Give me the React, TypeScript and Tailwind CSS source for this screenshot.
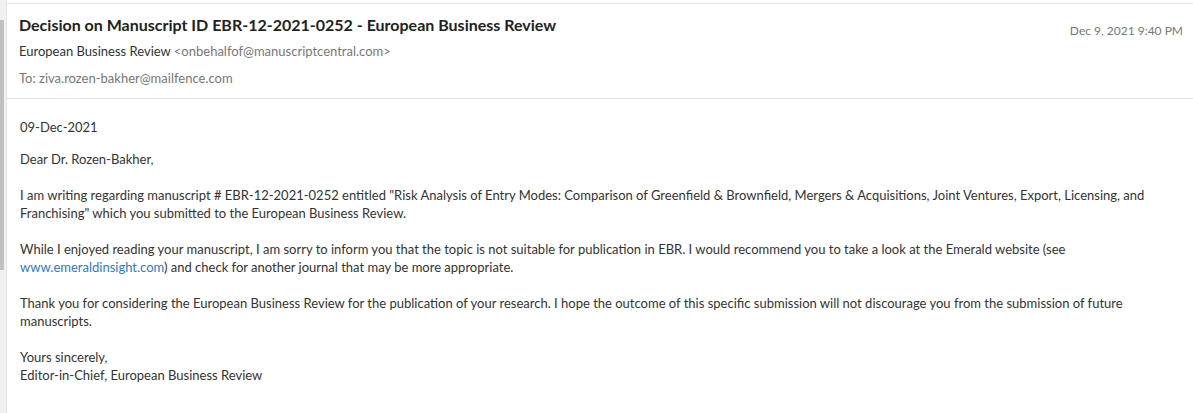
import React from 'react';

export default function App() {
  return (
    <div className="flex h-[413px] w-[1193px] bg-white font-['Lato',sans-serif] text-[#333]">
      {/* left scroll strip */}
      <div className="relative w-[6px] shrink-0 bg-[#f1f1f1]">
        <div className="absolute left-0 top-[20px] h-[250px] w-[4px] bg-[#c1c1c1]" />
      </div>
      <div className="flex-1 border-l border-[#e3e3e3]">
        <div className="mt-[3px] border-t border-[#e3e3e3]">
          <div className="flex items-start justify-between pl-[12px] pr-[10px]">
            <div>
              <h1 className="mt-[11px] text-[16px] font-bold leading-[20px] text-[#222]">
                Decision on Manuscript ID EBR-12-2021-0252 - European Business Review
              </h1>
              <p className="mt-[7px] text-[13px] leading-[18px] text-[#333]">
                European Business Review <span className="text-[#777]">&lt;onbehalfof@manuscriptcentral.com&gt;</span>
              </p>
              <p className="mt-[9px] text-[13px] leading-[18px] text-[#777]">To: ziva.rozen-bakher@mailfence.com</p>
            </div>
            <span className="mt-[19px] text-[12px] leading-[16px] text-[#777]">Dec 9, 2021 9:40 PM</span>
          </div>
          <div className="mt-[11px] border-t border-[#e3e3e3]" />
          <div className="pl-[13px] pr-[40px] pt-[19px] text-[13px] leading-[18px] text-[#333]">
            <p>09-Dec-2021</p>
            <p className="mt-[14px]">Dear Dr. Rozen-Bakher,</p>
            <p className="mt-[18px]">
              I am writing regarding manuscript # EBR-12-2021-0252 entitled "Risk Analysis of Entry Modes: Comparison of Greenfield &amp; Brownfield, Mergers &amp; Acquisitions, Joint Ventures, Export, Licensing, and Franchising" which you submitted to the European Business Review.
            </p>
            <p className="mt-[18px]">
              While I enjoyed reading your manuscript, I am sorry to inform you that the topic is not suitable for publication in EBR. I would recommend you to take a look at the Emerald website (see{' '}
              <a href="#" className="text-[#2a7ad0]">www.emeraldinsight.com</a>) and check for another journal that may be more appropriate.
            </p>
            <p className="mt-[18px]">
              Thank you for considering the European Business Review for the publication of your research. I hope the outcome of this specific submission will not discourage you from the submission of future manuscripts.
            </p>
            <p className="mt-[18px]">
              Yours sincerely,
              <br />
              Editor-in-Chief, European Business Review
            </p>
          </div>
        </div>
      </div>
    </div>
  );
}
